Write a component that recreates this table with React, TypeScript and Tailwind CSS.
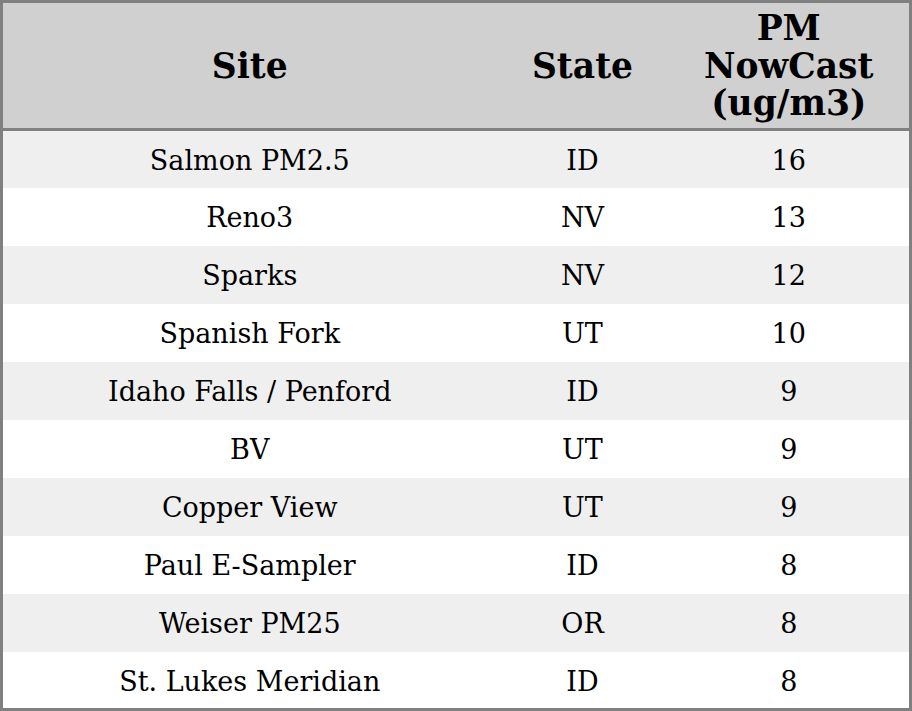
const rows: [string, string, string][] = [
  ['Salmon PM2.5', 'ID', '16'],
  ['Reno3', 'NV', '13'],
  ['Sparks', 'NV', '12'],
  ['Spanish Fork', 'UT', '10'],
  ['Idaho Falls / Penford', 'ID', '9'],
  ['BV', 'UT', '9'],
  ['Copper View', 'UT', '9'],
  ['Paul E-Sampler', 'ID', '8'],
  ['Weiser PM25', 'OR', '8'],
  ['St. Lukes Meridian', 'ID', '8'],
]

export default function App() {
  return (
    <div className="h-[711px] w-[912px] bg-white font-['DejaVu_Serif',serif] text-black">
      <table className="h-[711px] w-[912px] table-fixed border-collapse border-[3px] border-[#808080]">
        <colgroup>
          <col className="w-[495px]" />
          <col className="w-[172px]" />
          <col />
        </colgroup>
        <thead>
          <tr className="h-[128px] border-b-[3px] border-[#808080] bg-[#d0d0d0] text-[34.5px] leading-[37.5px] font-bold">
            <th className="px-2 pt-[2px] text-center">Site</th>
            <th className="px-2 pt-[2px] text-center">State</th>
            <th className="px-2 pt-[2px] text-center">
              PM
              <br />
              NowCast
              <br />
              (ug/m3)
            </th>
          </tr>
        </thead>
        <tbody>
          {rows.map(([site, state, pm], i) => (
            <tr key={site} className={`h-[57.7px] text-[27px] ${i % 2 === 0 ? 'bg-[#efefef]' : 'bg-white'}`}>
              <td className="px-2 pt-1 text-center">{site}</td>
              <td className="px-2 pt-1 text-center">{state}</td>
              <td className="px-2 pt-1 text-center">{pm}</td>
            </tr>
          ))}
        </tbody>
      </table>
    </div>
  )
}
